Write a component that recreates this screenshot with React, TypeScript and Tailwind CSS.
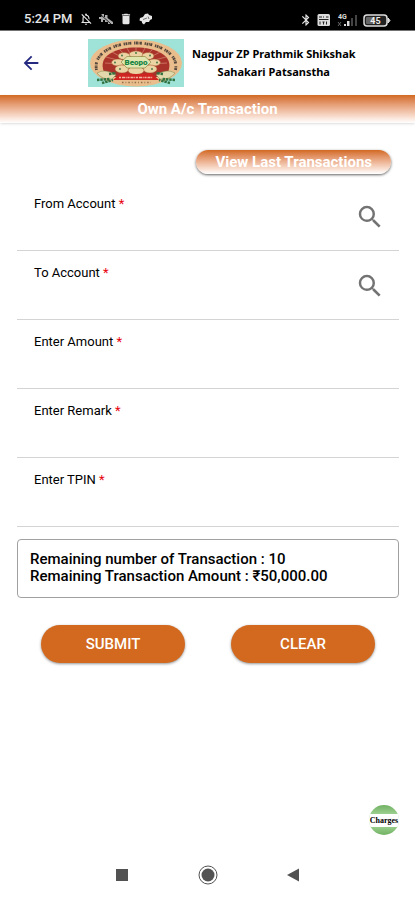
import { useState } from "react";
import type { FormEvent } from "react";
import {
  MdArrowBack,
  MdBluetooth,
  MdDelete,
  MdOutlineNotificationsOff,
  MdSearch,
} from "react-icons/md";

interface Field {
  id: string;
  label: string;
  type: string;
  lookup: boolean;
}

const fields: Field[] = [
  { id: "fromAccount", label: "From Account", type: "text", lookup: true },
  { id: "toAccount", label: "To Account", type: "text", lookup: true },
  { id: "amount", label: "Enter Amount", type: "text", lookup: false },
  { id: "remark", label: "Enter Remark", type: "text", lookup: false },
  { id: "tpin", label: "Enter TPIN", type: "password", lookup: false },
];

function StatusBar() {
  return (
    <div className="flex h-[31px] items-end justify-between border-b border-neutral-500 bg-black px-6 pb-[3px] text-neutral-200">
      <div className="flex items-center gap-[6px]">
        <span className="text-[13px] leading-4 font-medium">5:24 PM</span>
        <MdOutlineNotificationsOff className="size-[14px]" />
        {/* Muted call */}
        <svg className="h-3 w-[14px]" viewBox="0 0 14 12" fill="currentColor">
          <path
            d="M0 4h2.500V1H5v3h1V2h2.500v3L14 9v2H9V9H6V7H4v2H2V6H0z"
            opacity="0.75"
          />
          <path d="M1 1l11 10" stroke="#000" strokeWidth="0.8" />
        </svg>
        <MdDelete className="size-[14px]" />
        <svg className="h-3 w-[14px]" viewBox="0 0 14 12" fill="currentColor">
          <path d="M6 1L9 .5 10 2 13 3 13 6 11 7 10 9 7 9 5 11.500 3 10 3 8.500 0.500 7.500 1 5 4 4z" />
          <path d="M4 6.500l4-1.500M9 3.500L10 6" stroke="#555" strokeWidth="0.8" />
        </svg>
      </div>
      <div className="flex items-center gap-1">
        <MdBluetooth className="size-[14px]" />
        {/* VoLTE badge */}
        <svg className="h-3 w-[14px]" viewBox="0 0 14 12">
          <rect x="0.5" width="12.5" height="12" rx="1.500" fill="#ddd" />
          <path
            d="M2 3h3M6 3h1M9 3h2.500M2 5.500h9.500M3 7.500v3M5.500 8h2M6.500 8v2.500M9.500 7.500v3"
            stroke="#222"
            fill="none"
          />
        </svg>
        <svg className="h-[14px] w-6" viewBox="0 0 24 14">
          <text x="3" y="6" fontSize="7" fontWeight="700" fill="#ddd">
            4G
          </text>
          <path d="M3 9l3 4M6 9l-3 4" stroke="#666" />
          <path d="M9 11h2v2H9zM12 8h2.500v5H12z" fill="#ddd" />
          <path d="M16 5h2v8h-2zM20 2h2v11h-2z" fill="#444" />
        </svg>
        <svg className="h-[13px] w-7" viewBox="0 0 28 13">
          <rect
            x="1"
            y="1"
            width="23"
            height="11"
            rx="3"
            fill="#222"
            stroke="#ddd"
            strokeWidth="1.500"
          />
          <path d="M25 4l2 2.500-2 2.500z" fill="#ddd" stroke="#ddd" />
          <rect x="3" y="3" width="8" height="7" rx="1" fill="#666" />
          <text
            x="12.500"
            y="9.500"
            textAnchor="middle"
            fontSize="9"
            fontWeight="700"
            fill="#eee"
          >
            45
          </text>
        </svg>
      </div>
    </div>
  );
}

function SocietyLogo() {
  return (
    <svg className="h-12 w-24" viewBox="0 0 96 48">
      <rect width="96" height="48" fill="#9fe3d8" />
      <ellipse cx="48" cy="24" rx="46" ry="23.500" fill="#eabd8c" />
      {/* Ring lettering */}
      <path
        d="M8.500 31C5 14 26 4 48 4S91 14 87.500 31"
        fill="none"
        stroke="#54473c"
        strokeWidth="2.800"
        strokeDasharray="1.300 .6 1.800 .7 .8 .5 2 2.800"
      />
      {/* Red fan */}
      <path
        d="M16 33C9 16 29 8.500 48 8.500S87 16 80 33L70 38H26z"
        fill="#a9322b"
      />
      <path
        d="M48 26L17 24M48 26L18 18M48 26L24 13M48 26L31 10M48 26L39 9M48 26V8M48 26L57 9M48 26L65 10M48 26L72 13M48 26L78 18M48 26L79 24"
        stroke="#d98a72"
        strokeWidth="0.700"
      />
      {/* Petals */}
      <g fill="#ecd3a4" stroke="#a5562e" strokeWidth="0.500">
        <ellipse cx="48" cy="15.500" rx="7" ry="3.500" />
        <ellipse cx="36" cy="17" rx="6" ry="3.500" />
        <ellipse cx="60" cy="17" rx="6" ry="3.500" />
        <ellipse cx="30" cy="23.500" rx="6.500" ry="3.500" />
        <ellipse cx="66" cy="23.500" rx="6.500" ry="3.500" />
        <ellipse cx="34" cy="30" rx="7" ry="4" />
        <ellipse cx="62" cy="30" rx="7" ry="4" />
        <ellipse cx="48" cy="31.500" rx="8" ry="4" />
      </g>
      <g fill="#3c7245">
        <circle cx="48" cy="14" r="0.900" />
        <circle cx="34" cy="16.500" r="0.900" />
        <circle cx="62" cy="16.500" r="0.900" />
        <circle cx="27" cy="23.500" r="0.900" />
        <circle cx="69" cy="23.500" r="0.900" />
        <circle cx="32" cy="30" r="0.900" />
        <circle cx="64" cy="30" r="0.900" />
      </g>
      <path
        d="M39 17.500H57L63 23L57 29H39L33 23z"
        fill="#dfe6b0"
        stroke="#8f8a45"
        strokeWidth="0.700"
      />
      <text
        x="48"
        y="26"
        textAnchor="middle"
        fontSize="8"
        fontWeight="900"
        fill="#168443"
      >
        Beopo
      </text>
      {/* Ribbon */}
      <path d="M33 34Q48 36 63 34L71 41H25z" fill="#d02420" />
      <path
        d="M31 38.500H65"
        stroke="#f2b7a2"
        strokeWidth="1.500"
        strokeDasharray="2 1 3 .7 1 .8"
      />
      <path
        d="M34 43.500H63"
        stroke="#8d704d"
        strokeWidth="1.500"
        strokeDasharray="1.500 2 .8 2"
      />
      {/* Leaves */}
      <g fill="#e3d7ac" stroke="#7a8b4e" strokeWidth="0.500">
        <path d="M9 34Q17 29 28 36L24 40Q14 41 9 34z" />
        <path d="M87 34Q79 29 68 36L72 40Q82 41 87 34z" />
      </g>
      <path
        d="M9 41L22 40M14 44L25 41M21 35L28 34M87 41L74 40M82 44L71 41M75 35L68 34"
        stroke="#317241"
        strokeWidth="2.500"
        strokeDasharray="2.500 .8"
      />
    </svg>
  );
}

function Header() {
  return (
    <header className="flex h-16 items-center bg-white px-5">
      <button type="button" aria-label="Back" className="text-[#252a80]">
        <MdArrowBack className="size-[22px]" />
      </button>
      <div className="flex flex-1 items-center gap-2 pl-[46px]">
        <SocietyLogo />
        <p className="text-center font-['Noto_Sans','Open_Sans',sans-serif] text-[11px] leading-[18px] font-bold text-black">
          Nagpur ZP Prathmik Shikshak
          <br />
          Sahakari Patsanstha
        </p>
      </div>
    </header>
  );
}

function NavBar() {
  return (
    <nav className="flex h-[50px] items-center justify-center gap-[66px] bg-white text-neutral-600">
      <button type="button" aria-label="Recent apps">
        <svg className="size-5" viewBox="0 0 20 20" fill="currentColor">
          <rect x="4" y="4" width="12" height="12" />
        </svg>
      </button>
      <button type="button" aria-label="Home">
        <svg className="size-5" viewBox="0 0 20 20">
          <circle cx="10" cy="10" r="9" fill="none" stroke="currentColor" />
          <circle cx="10" cy="10" r="6.500" fill="currentColor" />
        </svg>
      </button>
      <button type="button" aria-label="Previous">
        <svg className="size-5" viewBox="0 0 20 20" fill="currentColor">
          <path d="M3 10L15 3.500V16.500z" />
        </svg>
      </button>
    </nav>
  );
}

export default function App() {
  const [values, setValues] = useState<Record<string, string>>({});

  const handleSubmit = (e: FormEvent) => {
    e.preventDefault();
  };

  return (
    <div className="flex min-h-screen flex-col bg-white font-[Roboto,sans-serif] text-black">
      <StatusBar />
      <Header />

      <h1 className="h-7 bg-linear-to-b from-[#d2691e] to-white text-center text-[15px] leading-7 font-bold text-white shadow">
        Own A/c Transaction
      </h1>

      <main className="flex flex-1 flex-col pr-4 pl-[17px]">
        <button
          type="button"
          className="mt-[27px] mr-2 h-6 self-end rounded-full bg-linear-to-b from-[#d2691e] to-white px-[19px] text-[15px] leading-6 font-bold text-white shadow-sm shadow-neutral-500"
        >
          View Last Transactions
        </button>

        <form onSubmit={handleSubmit} className="mt-2">
          {fields.map((field) => (
            <div
              key={field.id}
              className="flex h-[69px] items-center border-b border-neutral-300 pr-[14px] pl-[17px]"
            >
              <div className="flex flex-1 flex-col">
                <label htmlFor={field.id} className="text-[13px] leading-5">
                  {field.label} <span className="text-red-600">*</span>
                </label>
                <input
                  id={field.id}
                  type={field.type}
                  value={values[field.id] ?? ""}
                  onChange={(e) =>
                    setValues({ ...values, [field.id]: e.target.value })
                  }
                  className="h-6 w-full bg-transparent text-sm outline-none"
                />
              </div>
              {field.lookup && (
                <button
                  type="button"
                  aria-label={`Search ${field.label}`}
                  className="pt-[2px] text-neutral-500"
                >
                  <MdSearch className="size-[30px]" />
                </button>
              )}
            </div>
          ))}

          {/* Remaining limits */}
          <div className="mt-3 rounded border border-neutral-400 px-3 pt-[11px] pb-3 text-[15px] leading-[17px] font-medium">
            <p>Remaining number of Transaction : 10</p>
            <p>Remaining Transaction Amount : ₹50,000.00</p>
          </div>

          <div className="mt-[27px] flex gap-[46px] px-6">
            <button
              type="submit"
              className="h-[38px] flex-1 rounded-full bg-[#d2691e] text-[15px] leading-[38px] font-medium text-white shadow-sm shadow-neutral-400"
            >
              SUBMIT
            </button>
            <button
              type="button"
              onClick={() => setValues({})}
              className="h-[38px] flex-1 rounded-full bg-[#d2691e] text-[15px] leading-[38px] font-medium text-white shadow-sm shadow-neutral-400"
            >
              CLEAR
            </button>
          </div>
        </form>

        <button
          type="button"
          className="mt-auto mb-[15px] flex size-[30px] items-center justify-center self-end overflow-hidden rounded-full bg-linear-to-b from-[#71b263] via-[#b9e3ad] to-[#71b263]"
        >
          <span className="bg-white px-px font-['Liberation_Serif',serif] text-[8px] leading-[13px] font-bold">
            Charges
          </span>
        </button>
      </main>

      <NavBar />
    </div>
  );
}
